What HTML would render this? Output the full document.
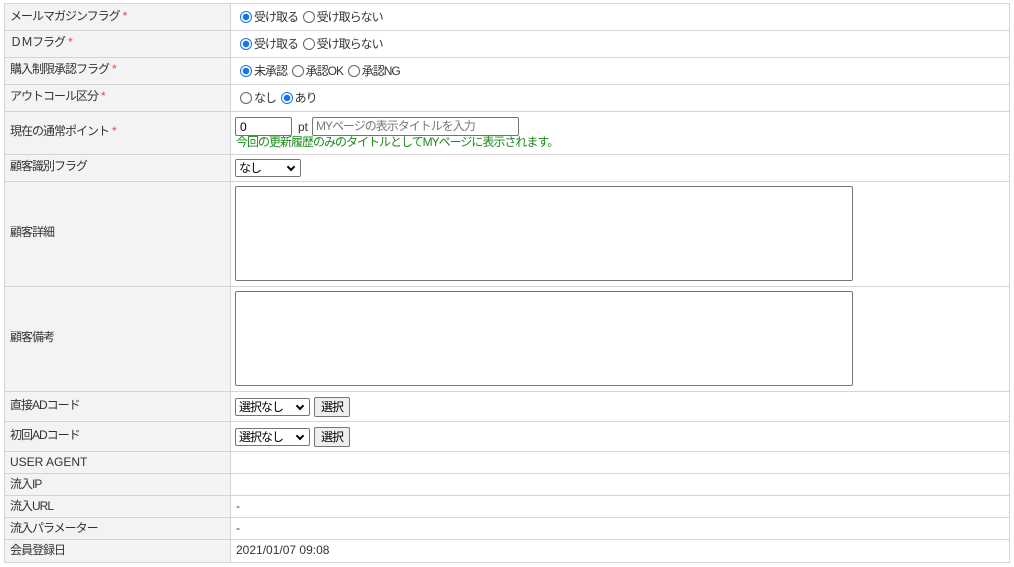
<!DOCTYPE html>
<html><head><meta charset="utf-8"><style>
body{margin:0;background:#fff;font-family:"Liberation Sans","Noto Sans CJK JP",sans-serif;font-size:12px;line-height:14px;color:#333;}
.j{letter-spacing:-1px;}
.r{position:absolute;left:4px;width:1006px;border-top:1px solid #d4d4d4;}
.l{position:absolute;left:0;top:0;bottom:0;width:225px;background:#f2f3f2;border-left:1px solid #d4d4d4;border-right:1px solid #d4d4d4;}
.l span{position:absolute;left:5px;letter-spacing:-1px;}
.v{position:absolute;left:231px;}
.bd{position:absolute;right:0;top:0;bottom:0;border-right:1px solid #d4d4d4;}
.s{color:#ef4444;font-weight:normal;margin-left:3px;}
.rad{display:inline-block;width:12px;height:12px;border:1px solid #666;border-radius:50%;vertical-align:-2px;margin-right:2px;box-sizing:border-box;}
.rad.on{border:1px solid #1a73e8;background:radial-gradient(circle,#1a73e8 0 3px,#fff 3.5px);}
.inp{position:absolute;border:1px solid #767676;border-radius:2px;background:#fff;box-sizing:border-box;}
.btn{position:absolute;border:1px solid #767676;border-radius:2px;background:#efefef;box-sizing:border-box;text-align:center;line-height:18px;color:#000;letter-spacing:-1px;}
.sel{position:absolute;border:1px solid #767676;border-radius:2px;background:#fff;box-sizing:border-box;color:#000;padding-left:3px;line-height:16px;letter-spacing:-1px;}
.sel:after{content:"";position:absolute;right:6px;top:4px;width:4px;height:4px;border-right:2px solid #000;border-bottom:2px solid #000;transform:rotate(45deg);}
</style></head><body>
<div class="r" style="top:3px;height:27px"><div class="l"><span style="top:5px">メールマガジンフラグ<b class="s">*</b></span></div><div class="v j" style="top:6px;left:236px"><i class="rad on"></i>受け取る &nbsp;<i class="rad"></i>受け取らない</div><div class="bd"></div></div>
<div class="r" style="top:30px;height:27px"><div class="l"><span style="top:4px">ＤＭフラグ<b class="s">*</b></span></div><div class="v j" style="top:6px;left:236px"><i class="rad on"></i>受け取る &nbsp;<i class="rad"></i>受け取らない</div><div class="bd"></div></div>
<div class="r" style="top:57px;height:27px"><div class="l"><span style="top:4px">購入制限承認フラグ<b class="s">*</b></span></div><div class="v j" style="top:6px;left:236px"><i class="rad on"></i>未承認 &nbsp;<i class="rad"></i>承認OK &nbsp;<i class="rad"></i>承認NG</div><div class="bd"></div></div>
<div class="r" style="top:84px;height:27px"><div class="l"><span style="top:4px">アウトコール区分<b class="s">*</b></span></div><div class="v j" style="top:6px;left:236px"><i class="rad"></i>なし &nbsp;<i class="rad on"></i>あり</div><div class="bd"></div></div>
<div class="r" style="top:111px;height:43px"><div class="l"><span style="top:12px">現在の通常ポイント<b class="s">*</b></span></div>
<div class="inp" style="left:231px;top:5px;width:57px;height:19px;padding:2px 4px;color:#000">0</div>
<div class="v" style="top:8px;left:294px">pt</div>
<div class="inp j" style="left:308px;top:5px;width:207px;height:19px;padding:1px 3px;color:#777">MYページの表示タイトルを入力</div>
<div class="v j" style="top:23px;left:232px;color:#1a8a1a">今回の更新履歴のみのタイトルとしてMYページに表示されます。</div><div class="bd"></div></div>
<div class="r" style="top:154px;height:27px"><div class="l"><span style="top:4px">顧客識別フラグ</span></div><div class="sel" style="left:231px;top:4px;width:66px;height:18px">なし</div><div class="bd"></div></div>
<div class="r" style="top:181px;height:105px"><div class="l"><span style="top:43px">顧客詳細</span></div><div class="inp" style="left:231px;top:4px;width:618px;height:95px"></div><div class="bd"></div></div>
<div class="r" style="top:286px;height:105px"><div class="l"><span style="top:43px">顧客備考</span></div><div class="inp" style="left:231px;top:4px;width:618px;height:95px"></div><div class="bd"></div></div>
<div class="r" style="top:391px;height:30px"><div class="l"><span style="top:6px">直接ADコード</span></div><div class="sel" style="left:231px;top:6px;width:75px;height:18px">選択なし</div><div class="btn" style="left:310px;top:5px;width:36px;height:20px">選択</div><div class="bd"></div></div>
<div class="r" style="top:421px;height:30px"><div class="l"><span style="top:6px">初回ADコード</span></div><div class="sel" style="left:231px;top:6px;width:75px;height:18px">選択なし</div><div class="btn" style="left:310px;top:5px;width:36px;height:20px">選択</div><div class="bd"></div></div>
<div class="r" style="top:451px;height:22px"><div class="l"><span style="top:3px;letter-spacing:0">USER AGENT</span></div><div class="bd"></div></div>
<div class="r" style="top:473px;height:22px"><div class="l"><span style="top:3px">流入IP</span></div><div class="bd"></div></div>
<div class="r" style="top:495px;height:22px"><div class="l"><span style="top:3px">流入URL</span></div><div class="v" style="top:3px;left:232px">-</div><div class="bd"></div></div>
<div class="r" style="top:517px;height:22px"><div class="l"><span style="top:3px">流入パラメーター</span></div><div class="v" style="top:3px;left:232px">-</div><div class="bd"></div></div>
<div class="r" style="top:539px;height:22px;border-bottom:1px solid #d4d4d4"><div class="l"><span style="top:3px">会員登録日</span></div><div class="v" style="top:3px;left:232px">2021/01/07 09:08</div><div class="bd"></div></div>
</body></html>
